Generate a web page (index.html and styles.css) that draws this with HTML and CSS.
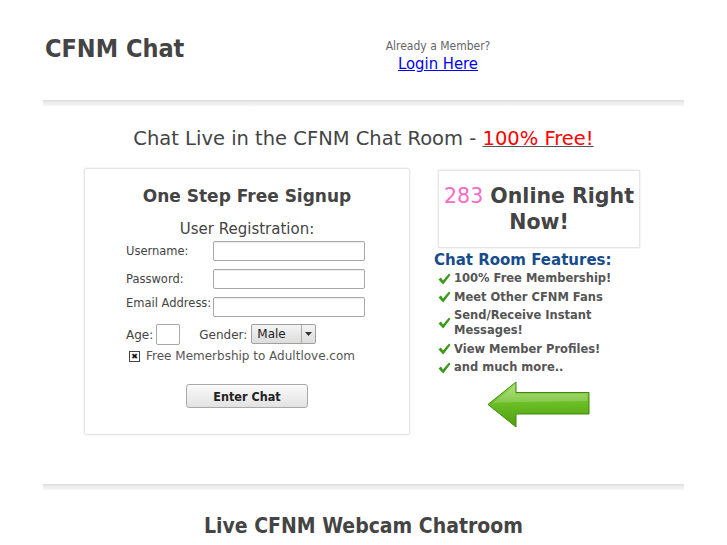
FILE: index.html
```html
<!DOCTYPE html>
<html lang="en">
<head>
    <meta charset="UTF-8">
    <title>CFNM Chat</title>
    <link rel="stylesheet" href="styles.css">
</head>
<body>

<div class="wrap">

    <!-- Header -->
    <div class="header">
        <div class="logo">CFNM Chat</div>
        <div class="login">
            <div class="member">Already a Member?</div>
            <a href="#" class="login-link">Login Here</a>
        </div>
    </div>

    <div class="sep"></div>

    <h1 class="headline">Chat Live in the CFNM Chat Room - <a href="#" class="free">100% Free!</a></h1>

    <div class="main">

        <!-- Signup Box -->
        <div class="signup">
            <h2>One Step Free Signup</h2>
            <h3>User Registration:</h3>
            <div class="fields">
                <label>Username:</label>
                <input type="text" class="field">
                <label>Password:</label>
                <input type="password" class="field">
                <label class="top">Email Address:</label>
                <input type="text" class="field">
            </div>
            <div class="age-row">
                <label>Age:</label>
                <input type="text" class="age">
                <label class="gender-label">Gender:</label>
                <span class="select">
                    <span class="select-value">Male</span>
                    <span class="caret"><svg width="7" height="4" viewBox="0 0 7 4"><path d="M0 0 L7 0 L3.5 4 Z" fill="#333"/></svg></span>
                </span>
            </div>
            <div class="check-row">
                <span class="checkbox">&#10006;</span>
                <span>Free Memerbship to Adultlove.com</span>
            </div>
            <div class="submit-row">
                <button class="enter">Enter Chat</button>
            </div>
        </div>

        <!-- Right Column -->
        <div class="side">
            <div class="online"><span class="count">283</span> Online Right Now!</div>
            <h4>Chat Room Features:</h4>
            <ul class="features">
                <li><svg class="tick" width="13" height="12" viewBox="0 0 13 12"><path d="M0.5 6.5 L3 4.5 L5 7.5 L11 0.5 L12.5 2 L5.2 11.5 Z" fill="#3b9a1a"/></svg>100% Free Membership!</li>
                <li><svg class="tick" width="13" height="12" viewBox="0 0 13 12"><path d="M0.5 6.5 L3 4.5 L5 7.5 L11 0.5 L12.5 2 L5.2 11.5 Z" fill="#3b9a1a"/></svg>Meet Other CFNM Fans</li>
                <li><svg class="tick" width="13" height="12" viewBox="0 0 13 12"><path d="M0.5 6.5 L3 4.5 L5 7.5 L11 0.5 L12.5 2 L5.2 11.5 Z" fill="#3b9a1a"/></svg>Send/Receive Instant Messages!</li>
                <li><svg class="tick" width="13" height="12" viewBox="0 0 13 12"><path d="M0.5 6.5 L3 4.5 L5 7.5 L11 0.5 L12.5 2 L5.2 11.5 Z" fill="#3b9a1a"/></svg>View Member Profiles!</li>
                <li><svg class="tick" width="13" height="12" viewBox="0 0 13 12"><path d="M0.5 6.5 L3 4.5 L5 7.5 L11 0.5 L12.5 2 L5.2 11.5 Z" fill="#3b9a1a"/></svg>and much more..</li>
            </ul>
            <svg class="arrow" width="103" height="47" viewBox="0 0 103 47">
                <defs>
                    <linearGradient id="arrowFill" x1="0" y1="0" x2="0" y2="1">
                        <stop offset="0" stop-color="#a6dc6a"/>
                        <stop offset="0.45" stop-color="#6cbf26"/>
                        <stop offset="1" stop-color="#4e9e0c"/>
                    </linearGradient>
                </defs>
                <path d="M1 23.5 L29 1 L29 11.5 L102 11.5 L102 33 L29 33 L29 46 Z" fill="url(#arrowFill)" stroke="#3f8a0e" stroke-width="1"/>
                <path d="M6 22 L28 4.5 L28 13 L100 13 L100 20 L30 21 Z" fill="#ffffff" opacity="0.18"/>
            </svg>
        </div>
    </div>

    <div class="sep"></div>

    <h2 class="footer-title">Live CFNM Webcam Chatroom</h2>

</div>

</body>
</html>
```

FILE: styles.css
```css
body {
    margin: 0;
    background: #fff;
    font-family: "DejaVu Sans", Verdana, sans-serif;
    color: #444;
}
.wrap {
    width: 641px;
    margin: 0 auto;
}
.logo,
.login,
.enter,
.footer-title {
    font-family: "DejaVu Sans Condensed", "DejaVu Sans", sans-serif;
    font-stretch: condensed;
}

/* header */
.header {
    display: flex;
    height: 100px;
}
.logo {
    width: 290px;
    padding: 34px 0 0 2px;
    font-weight: bold;
    font-size: 25px;
    color: #444;
}
.login {
    width: 206px;
    padding-top: 39px;
    text-align: center;
}
.member {
    font-size: 12px;
    color: #666;
}
.login-link {
    display: inline-block;
    margin-top: 1px;
    font-size: 16.5px;
    color: #00e;
}

.sep {
    height: 6px;
    background: linear-gradient(#dcdcdc, #ececec 40%, #f6f6f6);
}

.headline {
    margin: 21px 0 0;
    text-align: center;
    font-weight: normal;
    font-size: 19.5px;
    color: #444;
}
.free {
    color: #f00;
    text-decoration-color: #555;
}

/* main area */
.main {
    display: flex;
    gap: 24px;
    padding-left: 41px;
    margin-top: 18px;
    height: 316px;
}
.signup {
    box-sizing: border-box;
    width: 326px;
    height: 267px;
    border: 1px solid #e6e6e6;
    box-shadow: 0 0 2px #e0e0e0;
    border-radius: 2px;
}
.signup h2 {
    margin: 17px 0 0;
    text-align: center;
    font-size: 17px;
    color: #444;
}
.signup h3 {
    margin: 14px 0 0;
    text-align: center;
    font-weight: normal;
    font-size: 15px;
    color: #444;
}
.fields {
    display: grid;
    grid-template-columns: 87px 152px;
    row-gap: 8px;
    padding-left: 41px;
    margin-top: 3px;
    font-size: 11.5px;
    white-space: nowrap;
}
.fields label {
    align-self: center;
}
.fields label.top {
    align-self: start;
    margin-top: -1px;
}
.field {
    box-sizing: border-box;
    width: 152px;
    height: 20px;
    margin: 0;
    border: 1px solid #a8a8a8;
    border-radius: 2px;
    box-shadow: inset 0 1px 1px #eee;
}
.age-row {
    display: flex;
    align-items: center;
    padding-left: 41px;
    margin-top: 7px;
    font-size: 12px;
}
.age {
    box-sizing: border-box;
    width: 24px;
    height: 21px;
    margin: 0 0 0 3px;
    border: 1px solid #a8a8a8;
    border-radius: 2px;
}
.gender-label {
    margin-left: 19px;
}
.select {
    display: flex;
    box-sizing: border-box;
    width: 65px;
    height: 20px;
    margin-left: 4px;
    margin-top: -2px;
    border: 1px solid #a0a0a0;
    border-radius: 2px;
    background: linear-gradient(#f4f4f4, #dcdcdc);
    font-size: 12px;
    color: #222;
}
.select-value {
    flex: 1;
    padding: 2px 0 0 5px;
}
.caret {
    width: 13px;
    border-left: 1px solid #aaa;
    display: flex;
    align-items: center;
    justify-content: center;
}
.check-row {
    display: flex;
    align-items: center;
    padding-left: 44px;
    margin-top: 4px;
    font-size: 12px;
    color: #555;
}
.checkbox {
    box-sizing: border-box;
    width: 11px;
    height: 11px;
    margin-right: 6px;
    border: 1px solid #444;
    font-size: 8px;
    line-height: 9px;
    text-align: center;
    color: #111;
    background: #fff;
}
.submit-row {
    text-align: center;
    margin-top: 21px;
}
.enter {
    width: 122px;
    height: 24px;
    border: 1px solid #a9a9a9;
    border-radius: 3px;
    background: linear-gradient(#fafafa, #e2e2e2);
    font-weight: bold;
    font-size: 12.5px;
    color: #222;
    cursor: pointer;
}

/* right column */
.side {
    width: 206px;
}
.online {
    box-sizing: border-box;
    width: 202px;
    height: 78px;
    margin: 2px 0 0 4px;
    padding-top: 12px;
    border: 1px solid #e6e6e6;
    box-shadow: 0 0 2px #e0e0e0;
    text-align: center;
    font-weight: bold;
    font-size: 20.5px;
    line-height: 26px;
    color: #444;
}
.count {
    color: #f76bcb;
    font-weight: normal;
}
.side h4 {
    margin: 3px 0 0;
    font-size: 15px;
    color: #174c8c;
}
.features {
    list-style: none;
    margin: 2px 0 0;
    padding: 0 0 0 4px;
}
.features li {
    display: flex;
    align-items: center;
    margin-bottom: 3.5px;
    font-weight: bold;
    font-size: 11.5px;
    line-height: 15px;
    color: #555;
}
.tick {
    flex: none;
    margin-right: 3px;
}
.arrow {
    display: block;
    margin: 6px 0 0 53px;
}

.footer-title {
    margin: 24px 0 0;
    text-align: center;
    font-size: 21px;
    color: #444;
}
```
